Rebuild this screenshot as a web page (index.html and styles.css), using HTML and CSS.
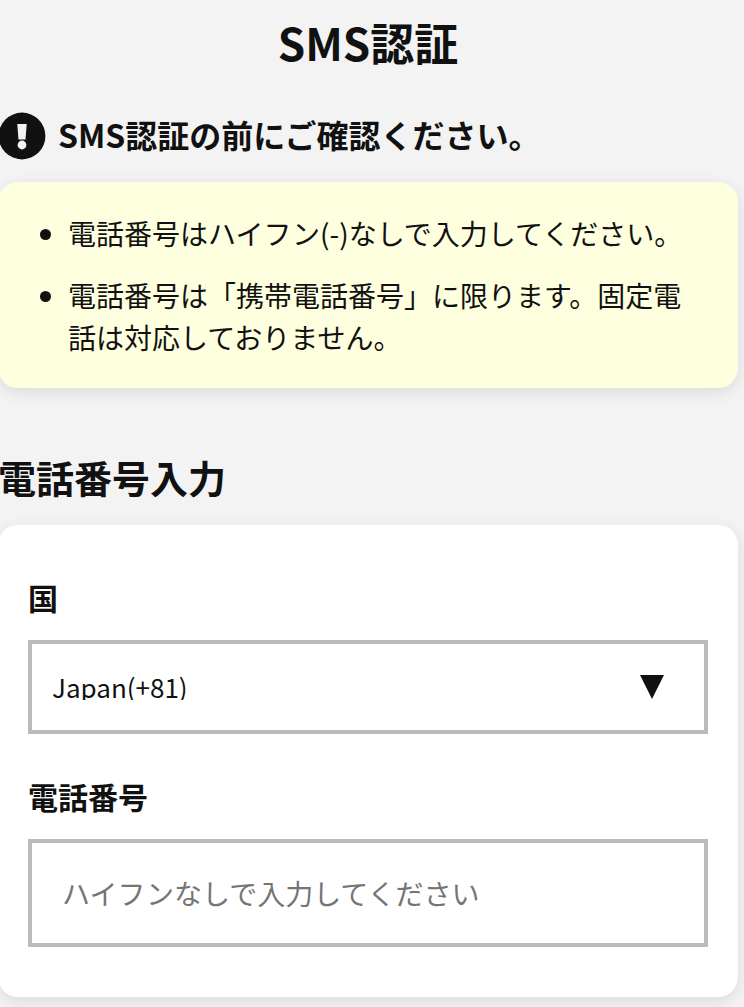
FILE: index.html
```
<!DOCTYPE html>
<html lang="ja">
<head>
<meta charset="UTF-8" />
<title>SMS認証</title>
<meta name="viewport" content="width=device-width, initial-scale=1" />
<link rel="stylesheet" href="styles.css">
</head>
<body>

<main class="container">
  <h1 class="page-title">SMS認証</h1>

  <!-- 注意事項 -->
  <section>
    <h2 class="notice-title">
      <svg class="notice-icon" viewBox="0 0 48 48" aria-hidden="true">
        <circle cx="24" cy="24" r="23.4" fill="#111"/>
        <path d="M19.3 12h9.4l-1.2 15.6h-7z" fill="#f3f3f3"/>
        <circle cx="24" cy="33" r="4.4" fill="#f3f3f3"/>
      </svg>
      SMS認証の前にご確認ください。
    </h2>
    <ul class="card notice-card">
      <li>電話番号はハイフン(-)なしで入力してください。</li>
      <li>電話番号は「携帯電話番号」に限ります。固定電話は対応しておりません。</li>
    </ul>
  </section>

  <!-- 入力フォーム -->
  <section>
    <h2 class="section-title">電話番号入力</h2>
    <form class="card form-card">
      <div class="form-group">
        <label for="country">国</label>
        <div class="select-wrap">
          <select id="country">
            <option value="81">Japan(+81)</option>
          </select>
        </div>
      </div>
      <div class="form-group">
        <label for="tel">電話番号</label>
        <input type="tel" id="tel" placeholder="ハイフンなしで入力してください">
      </div>
    </form>
  </section>
</main>

</body>
</html>
```
FILE: styles.css
```
* { box-sizing: border-box; }
body { margin: 0; background: #f3f3f3; color: #111; font-family: "Noto Sans CJK JP", sans-serif; font-size: 28px; line-height: 42px; overflow-x: hidden; }
h1, h2, ul { margin: 0; padding: 0; }
.container { margin: 0 6px 0 -2px; padding: 10px 0 20px; }
.page-title { font-size: 44px; line-height: 64px; text-align: center; margin-bottom: 38px; }
.notice-title { display: flex; align-items: flex-start; gap: 12px; font-size: 32px; line-height: 44px; margin-bottom: 22px; }
.notice-icon { width: 48px; height: 48px; flex-shrink: 0; }
.card { border-radius: 20px; box-shadow: 0 4px 16px rgba(0, 0, 0, 0.1); }
.notice-card { background: #feffdf; padding: 30px 30px 30px 70px; margin-bottom: 62px; }
.notice-card li + li { margin-top: 20px; }
.section-title { font-size: 38px; line-height: 54px; margin-bottom: 21px; }
.form-card { background: #fff; padding: 50px 30px; }
.form-group + .form-group { margin-top: 40px; }
.form-group label { display: block; font-size: 30px; font-weight: bold; line-height: 45px; margin-bottom: 20px; }
.select-wrap { position: relative; }
.select-wrap::after { content: ""; position: absolute; top: 35px; right: 44px; border: 12px solid transparent; border-top: 24px solid #111; border-bottom: 0; pointer-events: none; }
select, input { display: block; width: 100%; border: 4px solid #bbb; border-radius: 0; background: #fff; color: #111; font-family: inherit; font-size: 28px; }
select { appearance: none; height: 94px; font-size: 26px; line-height: 26px; padding: 30px 80px 30px 20px; }
input { height: 108px; padding: 30px; }
input::placeholder { color: #757575; }
```
